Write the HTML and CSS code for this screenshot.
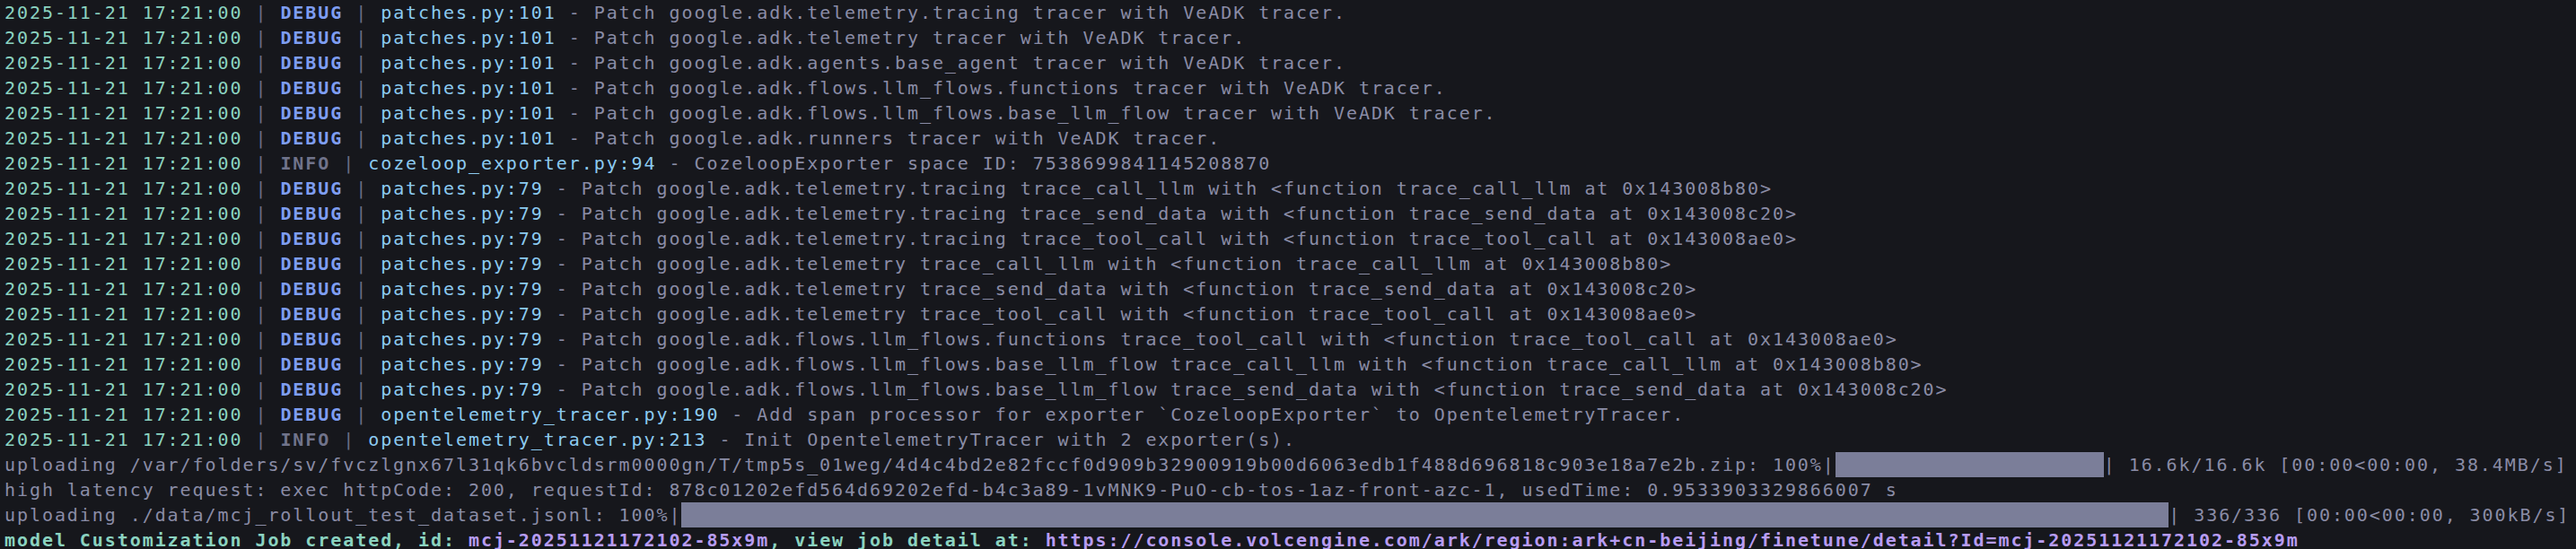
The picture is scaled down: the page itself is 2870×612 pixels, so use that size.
FILE: index.html
```html
<!DOCTYPE html>
<html lang="en">
<head>
<meta charset="utf-8">
<title>Terminal log</title>
<link rel="stylesheet" href="styles.css">
</head>
<body>
<main class="term">
<div class="ln"><span class="ts">2025-11-21 17:21:00</span><span class="sep"> | </span><span class="dbg">DEBUG</span><span class="sep"> | </span><span class="mod">patches.py:101</span><span class="msg"> - Patch google.adk.telemetry.tracing tracer with VeADK tracer.</span></div>
<div class="ln"><span class="ts">2025-11-21 17:21:00</span><span class="sep"> | </span><span class="dbg">DEBUG</span><span class="sep"> | </span><span class="mod">patches.py:101</span><span class="msg"> - Patch google.adk.telemetry tracer with VeADK tracer.</span></div>
<div class="ln"><span class="ts">2025-11-21 17:21:00</span><span class="sep"> | </span><span class="dbg">DEBUG</span><span class="sep"> | </span><span class="mod">patches.py:101</span><span class="msg"> - Patch google.adk.agents.base_agent tracer with VeADK tracer.</span></div>
<div class="ln"><span class="ts">2025-11-21 17:21:00</span><span class="sep"> | </span><span class="dbg">DEBUG</span><span class="sep"> | </span><span class="mod">patches.py:101</span><span class="msg"> - Patch google.adk.flows.llm_flows.functions tracer with VeADK tracer.</span></div>
<div class="ln"><span class="ts">2025-11-21 17:21:00</span><span class="sep"> | </span><span class="dbg">DEBUG</span><span class="sep"> | </span><span class="mod">patches.py:101</span><span class="msg"> - Patch google.adk.flows.llm_flows.base_llm_flow tracer with VeADK tracer.</span></div>
<div class="ln"><span class="ts">2025-11-21 17:21:00</span><span class="sep"> | </span><span class="dbg">DEBUG</span><span class="sep"> | </span><span class="mod">patches.py:101</span><span class="msg"> - Patch google.adk.runners tracer with VeADK tracer.</span></div>
<div class="ln"><span class="ts">2025-11-21 17:21:00</span><span class="sep"> | </span><span class="inf">INFO</span><span class="sep"> | </span><span class="mod">cozeloop_exporter.py:94</span><span class="msg"> - CozeloopExporter space ID: 7538699841145208870</span></div>
<div class="ln"><span class="ts">2025-11-21 17:21:00</span><span class="sep"> | </span><span class="dbg">DEBUG</span><span class="sep"> | </span><span class="mod">patches.py:79</span><span class="msg"> - Patch google.adk.telemetry.tracing trace_call_llm with &lt;function trace_call_llm at 0x143008b80&gt;</span></div>
<div class="ln"><span class="ts">2025-11-21 17:21:00</span><span class="sep"> | </span><span class="dbg">DEBUG</span><span class="sep"> | </span><span class="mod">patches.py:79</span><span class="msg"> - Patch google.adk.telemetry.tracing trace_send_data with &lt;function trace_send_data at 0x143008c20&gt;</span></div>
<div class="ln"><span class="ts">2025-11-21 17:21:00</span><span class="sep"> | </span><span class="dbg">DEBUG</span><span class="sep"> | </span><span class="mod">patches.py:79</span><span class="msg"> - Patch google.adk.telemetry.tracing trace_tool_call with &lt;function trace_tool_call at 0x143008ae0&gt;</span></div>
<div class="ln"><span class="ts">2025-11-21 17:21:00</span><span class="sep"> | </span><span class="dbg">DEBUG</span><span class="sep"> | </span><span class="mod">patches.py:79</span><span class="msg"> - Patch google.adk.telemetry trace_call_llm with &lt;function trace_call_llm at 0x143008b80&gt;</span></div>
<div class="ln"><span class="ts">2025-11-21 17:21:00</span><span class="sep"> | </span><span class="dbg">DEBUG</span><span class="sep"> | </span><span class="mod">patches.py:79</span><span class="msg"> - Patch google.adk.telemetry trace_send_data with &lt;function trace_send_data at 0x143008c20&gt;</span></div>
<div class="ln"><span class="ts">2025-11-21 17:21:00</span><span class="sep"> | </span><span class="dbg">DEBUG</span><span class="sep"> | </span><span class="mod">patches.py:79</span><span class="msg"> - Patch google.adk.telemetry trace_tool_call with &lt;function trace_tool_call at 0x143008ae0&gt;</span></div>
<div class="ln"><span class="ts">2025-11-21 17:21:00</span><span class="sep"> | </span><span class="dbg">DEBUG</span><span class="sep"> | </span><span class="mod">patches.py:79</span><span class="msg"> - Patch google.adk.flows.llm_flows.functions trace_tool_call with &lt;function trace_tool_call at 0x143008ae0&gt;</span></div>
<div class="ln"><span class="ts">2025-11-21 17:21:00</span><span class="sep"> | </span><span class="dbg">DEBUG</span><span class="sep"> | </span><span class="mod">patches.py:79</span><span class="msg"> - Patch google.adk.flows.llm_flows.base_llm_flow trace_call_llm with &lt;function trace_call_llm at 0x143008b80&gt;</span></div>
<div class="ln"><span class="ts">2025-11-21 17:21:00</span><span class="sep"> | </span><span class="dbg">DEBUG</span><span class="sep"> | </span><span class="mod">patches.py:79</span><span class="msg"> - Patch google.adk.flows.llm_flows.base_llm_flow trace_send_data with &lt;function trace_send_data at 0x143008c20&gt;</span></div>
<div class="ln"><span class="ts">2025-11-21 17:21:00</span><span class="sep"> | </span><span class="dbg">DEBUG</span><span class="sep"> | </span><span class="mod">opentelemetry_tracer.py:190</span><span class="msg"> - Add span processor for exporter `CozeloopExporter` to OpentelemetryTracer.</span></div>
<div class="ln"><span class="ts">2025-11-21 17:21:00</span><span class="sep"> | </span><span class="inf">INFO</span><span class="sep"> | </span><span class="mod">opentelemetry_tracer.py:213</span><span class="msg"> - Init OpentelemetryTracer with 2 exporter(s).</span></div>
<div class="ln plain"><span>uploading /var/folders/sv/fvczlgnx67l31qk6bvcldsrm0000gn/T/tmp5s_01weg/4d4c4bd2e82fccf0d909b32900919b00d6063edb1f488d696818c903e18a7e2b.zip: 100%|</span><span class="bar" style="--n:21.4"></span><span>| 16.6k/16.6k [00:00&lt;00:00, 38.4MB/s]</span></div>
<div class="ln plain"><span>high latency request: exec httpCode: 200, requestId: 878c01202efd564d69202efd-b4c3a89-1vMNK9-PuO-cb-tos-1az-front-azc-1, usedTime: 0.9533903329866007 s</span></div>
<div class="ln plain"><span>uploading ./data/mcj_rollout_test_dataset.jsonl: 100%|</span><span class="bar" style="--n:118.6"></span><span>| 336/336 [00:00&lt;00:00, 300kB/s]</span></div>
<div class="ln done"><span class="ok">model Customization Job created, id: </span><span class="hl">mcj-20251121172102-85x9m</span><span class="ok">, view job detail at: </span><span class="hl">https://console.volcengine.com/ark/region:ark+cn-beijing/finetune/detail?Id=mcj-20251121172102-85x9m</span></div>
</main>
</body>
</html>
```

FILE: styles.css
```css
html, body {
  margin: 0;
  padding: 0;
  background: #16171c;
}

body {
  width: 2870px;
  height: 612px;
  overflow: hidden;
}

.term {
  --cw: 13.97px;
  --lh: 28px;
  display: flex;
  flex-direction: column;
  padding: 0 0 0 5px;
  font-family: "DejaVu Sans Mono", "Liberation Mono", monospace;
  font-size: 20px;
  letter-spacing: 1.93px;
  line-height: var(--lh);
  color: #8a8ca6;
}

.ln {
  height: var(--lh);
  white-space: pre;
  display: flex;
  align-items: flex-start;
}

.ts { color: #8bd3c0; }
.sep { color: #6a6d84; }
.dbg { color: #7e9df1; font-weight: bold; }
.inf { color: #70738b; font-weight: bold; }
.mod { color: #8ccaf0; }
.msg { color: #8a8ca6; }

.plain { color: #8a8ca6; }

.bar {
  display: inline-block;
  width: calc(var(--n) * var(--cw));
  height: var(--lh);
  background: #7b7e99;
}

.done { font-weight: bold; }
.ok { color: #8bd3c0; }
.hl { color: #b79cf2; }
```
